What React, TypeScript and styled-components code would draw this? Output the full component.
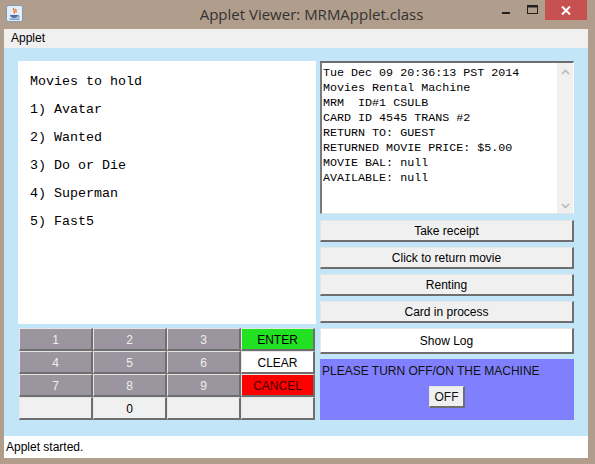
import React from "react";
import styled, { createGlobalStyle } from "styled-components";

const GlobalStyle = createGlobalStyle`
  html, body {
    margin: 0;
    padding: 0;
    background: #b09d8b;
  }
  * {
    box-sizing: border-box;
  }
`;

const Frame = styled.div`
  width: 595px;
  height: 464px;
  background: #b09d8b;
  display: flex;
  flex-direction: column;
  padding: 0 7px 6px 4px;
  font-family: "Liberation Sans", Arial, sans-serif;
`;

const TitleBar = styled.div`
  height: 29px;
  display: flex;
  align-items: flex-start;
  margin-left: -4px;
  margin-right: -7px;
`;

const AppIcon = styled.div`
  width: 30px;
  padding: 5px 0 0 6px;
  display: flex;
`;

const Title = styled.div`
  flex: 1;
  text-align: center;
  padding: 5px 0 0 100px;
  font-family: "Open Sans", "Liberation Sans", sans-serif;
  font-size: 15px;
  line-height: 18px;
  color: #333;
`;

const Controls = styled.div`
  display: flex;
  align-items: flex-start;
  padding-right: 8px;
`;

const Ctl = styled.div<{ $close?: boolean }>`
  width: ${(p) => (p.$close ? 42 : 26)}px;
  height: 20px;
  display: flex;
  align-items: center;
  justify-content: center;
  background: ${(p) => (p.$close ? "#c75050" : "transparent")};
`;

const MenuBar = styled.div`
  height: 19px;
  background: #f0f0f0;
  font-size: 12px;
  line-height: 19px;
  padding-left: 7px;
  color: #000;
`;

const Content = styled.div`
  flex: 1;
  background: #c2e6f8;
  padding: 13px 14px 0 14px;
  display: grid;
  grid-template-columns: 298px 254px;
  column-gap: 4px;
  align-items: start;
`;

const Column = styled.div`
  display: flex;
  flex-direction: column;
`;

const HoldList = styled.div`
  height: 263px;
  background: #fff;
  padding: 7px 12px;
  font-family: "Liberation Mono", "Courier New", monospace;
  font-size: 13.33px;
  line-height: 28px;
  color: #000;
  white-space: pre;
`;

const Keypad = styled.div`
  margin: 4px 1px 0 1px;
  display: grid;
  grid-template-columns: repeat(4, 1fr);
  grid-auto-rows: 23px;
`;

const KeyButton = styled.div<{ $bg: string; $fg: string }>`
  background: ${(p) => p.$bg};
  color: ${(p) => p.$fg};
  border-style: solid;
  border-width: 1px 2px 2px 1px;
  border-color: #e6e6e6 #6e6e6e #6e6e6e #e6e6e6;
  display: flex;
  align-items: center;
  justify-content: center;
  padding-top: 1px;
  font-size: 12px;
`;

const Receipt = styled.div`
  height: 153px;
  background: #fff;
  border-style: solid;
  border-width: 2px 1px 1px 2px;
  border-color: #6d6d6d #fff #e4e4e4 #7a7a7a;
  display: flex;
`;

const ReceiptText = styled.div`
  flex: 1;
  padding: 3px 0 0 1px;
  font-family: "Liberation Mono", "Courier New", monospace;
  font-size: 11.7px;
  line-height: 15px;
  color: #000;
  white-space: pre;
  overflow: hidden;
`;

const ScrollBar = styled.div`
  width: 16px;
  background: #f0f0f0;
  display: flex;
  flex-direction: column;
  justify-content: space-between;
  align-items: center;
  padding: 6px 0 4px;
`;

const ActionButton = styled.div<{ $white?: boolean; $tall?: boolean }>`
  height: ${(p) => (p.$tall ? 26 : 22)}px;
  margin-top: 5px;
  background: ${(p) => (p.$white ? "#fff" : "#f0f0f0")};
  border-style: solid;
  border-width: 1px 2px 2px 1px;
  border-color: #e6e6e6 #6e6e6e #6e6e6e #e6e6e6;
  display: flex;
  align-items: center;
  justify-content: center;
  padding-top: 1px;
  font-size: 12px;
  color: #000;
`;

const First = styled.div`
  margin-top: 1px;
`;

const PowerPanel = styled.div`
  margin-top: 5px;
  height: 61px;
  background: #8080ff;
  display: flex;
  flex-direction: column;
  align-items: center;
  padding-top: 5px;
  font-size: 12px;
  color: #111;
`;

const PowerText = styled.div`
  align-self: flex-start;
  padding-left: 2px;
`;

const OffButton = styled.div`
  margin-top: 8px;
  width: 36px;
  height: 22px;
  background: #f0f0f0;
  border-style: solid;
  border-width: 1px 2px 2px 1px;
  border-color: #e6e6e6 #6e6e6e #6e6e6e #e6e6e6;
  display: flex;
  align-items: center;
  justify-content: center;
  padding-top: 1px;
  font-size: 12px;
`;

const StatusBar = styled.div`
  height: 22px;
  background: #fff;
  font-size: 12px;
  line-height: 22px;
  padding-left: 2px;
  color: #000;
`;

const keys: { label: string; bg: string; fg: string }[] = [
  { label: "1", bg: "#9b959f", fg: "#eee" },
  { label: "2", bg: "#9b959f", fg: "#eee" },
  { label: "3", bg: "#9b959f", fg: "#eee" },
  { label: "ENTER", bg: "#22e022", fg: "#000" },
  { label: "4", bg: "#9b959f", fg: "#eee" },
  { label: "5", bg: "#9b959f", fg: "#eee" },
  { label: "6", bg: "#9b959f", fg: "#eee" },
  { label: "CLEAR", bg: "#fff", fg: "#000" },
  { label: "7", bg: "#9b959f", fg: "#eee" },
  { label: "8", bg: "#9b959f", fg: "#eee" },
  { label: "9", bg: "#9b959f", fg: "#eee" },
  { label: "CANCEL", bg: "#ff0000", fg: "#400" },
  { label: "", bg: "#f0f0f0", fg: "#000" },
  { label: "0", bg: "#f0f0f0", fg: "#000" },
  { label: "", bg: "#f0f0f0", fg: "#000" },
  { label: "", bg: "#f0f0f0", fg: "#000" },
];

const receipt = [
  "Tue Dec 09 20:36:13 PST 2014",
  "Movies Rental Machine",
  "MRM  ID#1 CSULB",
  "CARD ID 4545 TRANS #2",
  "RETURN TO: GUEST",
  "RETURNED MOVIE PRICE: $5.00",
  "MOVIE BAL: null",
  "AVAILABLE: null",
].join("\n");

const holds = [
  "Movies to hold",
  "1) Avatar",
  "2) Wanted",
  "3) Do or Die",
  "4) Superman",
  "5) Fast5",
].join("\n");

const JavaIcon = () => (
  <svg width="17" height="17" viewBox="0 0 17 17">
    <rect x="0.5" y="0.5" width="16" height="16" rx="2" fill="#e4eef8" stroke="#7f9ab8" />
    <path d="M8 3 C6 5 10 6 8 8.5 M10 4 C9 5.5 11 6 9.8 7.5" stroke="#e8702a" strokeWidth="1.3" fill="none" />
    <path d="M4 10 h8 c0 2 -2 3 -4 3 s-4 -1 -4 -3 z" fill="#4a6fa5" />
    <path d="M12 10.5 c1.5 0 1.5 2 -0.5 2" stroke="#4a6fa5" fill="none" />
    <rect x="3.5" y="13.6" width="10" height="1" fill="#4a6fa5" />
  </svg>
);

const Chevron = ({ up }: { up?: boolean }) => (
  <svg width="9" height="6" viewBox="0 0 9 6">
    <path d={up ? "M1 5 L4.5 1.5 L8 5" : "M1 1 L4.5 4.5 L8 1"} stroke="#b8b8b8" strokeWidth="1.6" fill="none" />
  </svg>
);

export default function App() {
  return (
    <>
      <GlobalStyle />
      <Frame>
        <TitleBar>
          <AppIcon>
            <JavaIcon />
          </AppIcon>
          <Title>Applet Viewer: MRMApplet.class</Title>
          <Controls>
            <Ctl>
              <svg width="10" height="10" viewBox="0 0 10 10">
                <rect x="1" y="7" width="8" height="2" fill="#222" />
              </svg>
            </Ctl>
            <Ctl>
              <svg width="11" height="10" viewBox="0 0 11 10">
                <rect x="0.5" y="0.5" width="10" height="8" fill="none" stroke="#222" />
                <rect x="0.5" y="0.5" width="10" height="2" fill="#222" />
              </svg>
            </Ctl>
            <Ctl $close>
              <svg width="10" height="9" viewBox="0 0 10 9">
                <path d="M1 0.5 L9 8.5 M9 0.5 L1 8.5" stroke="#fff" strokeWidth="2" />
              </svg>
            </Ctl>
          </Controls>
        </TitleBar>
        <MenuBar>Applet</MenuBar>
        <Content>
          <Column>
            <HoldList>{holds}</HoldList>
            <Keypad>
              {keys.map((k, i) => (
                <KeyButton key={i} $bg={k.bg} $fg={k.fg}>
                  {k.label}
                </KeyButton>
              ))}
            </Keypad>
          </Column>
          <Column>
            <Receipt>
              <ReceiptText>{receipt}</ReceiptText>
              <ScrollBar>
                <Chevron up />
                <Chevron />
              </ScrollBar>
            </Receipt>
            <First />
            <ActionButton>Take receipt</ActionButton>
            <ActionButton>Click to return movie</ActionButton>
            <ActionButton>Renting</ActionButton>
            <ActionButton>Card in process</ActionButton>
            <ActionButton $white $tall>
              Show Log
            </ActionButton>
            <PowerPanel>
              <PowerText>PLEASE TURN OFF/ON THE MACHINE</PowerText>
              <OffButton>OFF</OffButton>
            </PowerPanel>
          </Column>
        </Content>
        <StatusBar>Applet started.</StatusBar>
      </Frame>
    </>
  );
}
